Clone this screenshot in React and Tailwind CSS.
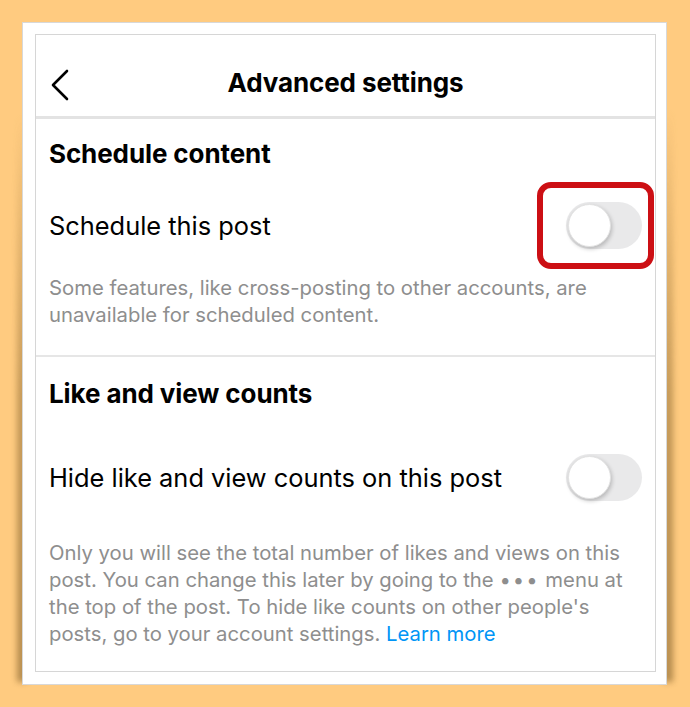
import React from 'react';

const Toggle = () => (
  <div className="w-[76px] h-[47px] rounded-full bg-[#e9e9ea] p-[2px] flex items-center shrink-0">
    <div className="w-[43px] h-[43px] rounded-full bg-white shadow-[1px_2px_4px_rgba(0,0,0,0.22)] border border-[#e2e2e2]" />
  </div>
);

export default function App() {
  return (
    <div className="w-[690px] h-[707px] bg-[#ffcb80] pt-[22px] pl-[22px]" style={{ fontFamily: 'Inter, "Liberation Sans", sans-serif' }}>
      <div className="relative w-[645px] h-[663px]">
        {/* side shadows behind the sheet */}
        <div className="absolute left-[-5px] top-[90px] w-[10px] h-[570px] bg-gradient-to-b from-transparent via-[#b38a4c] to-[#a07a40] blur-[3px] opacity-80" />
        <div className="absolute right-[-6px] top-[85px] w-[10px] h-[575px] bg-gradient-to-b from-transparent via-[#b38a4c] to-[#a07a40] blur-[3px] opacity-80" />
        <div className="relative w-[645px] h-[663px] bg-white border border-[#d8d8d8] pt-[11px] pl-[12px]">
          <div className="w-[621px] h-[638px] border border-[#d6d6d6] flex flex-col">
            <div className="h-[84px] flex items-center relative border-b-[3px] border-[#e3e3e3]">
              <svg className="absolute left-[14px] top-[34px]" width="20" height="32" viewBox="0 0 20 32" fill="none">
                <path d="M17 2 L3 16 L17 30" stroke="#000" strokeWidth="2.6" strokeLinecap="round" strokeLinejoin="round" />
              </svg>
              <div className="w-full text-center text-[26px] font-bold text-black pt-[14px] tracking-[-0.1px]">Advanced settings</div>
            </div>

            <div className="px-[13px]">
              <div className="text-[26px] font-bold text-black pt-[19px] leading-[32px] tracking-[-0.1px]">Schedule content</div>
              <div className="flex items-center justify-between mt-[32px]">
                <div className="text-[25.4px] text-black leading-[32px]">Schedule this post</div>
                <div className="relative">
                  <Toggle />
                  <div className="absolute -left-[29px] -top-[20px] w-[117px] h-[87px] border-[6px] border-[#cc0f14] rounded-[14px]" />
                </div>
              </div>
              <div className="text-[20.3px] text-[#8e8e8e] leading-[27px] mt-[25px] pb-[27px]">
                Some features, like cross-posting to other accounts, are unavailable for scheduled content.
              </div>
            </div>

            <div className="border-t-[2px] border-[#e6e6e6]" />

            <div className="px-[13px]">
              <div className="text-[26px] font-bold text-black pt-[21px] leading-[32px] tracking-[-0.1px]">Like and view counts</div>
              <div className="flex items-center justify-between mt-[44px]">
                <div className="text-[25.4px] text-black leading-[32px]">Hide like and view counts on this post</div>
                <Toggle />
              </div>
              <div className="text-[20.3px] text-[#8e8e8e] leading-[27px] mt-[38px]">
                Only you will see the total number of likes and views on this post. You can change this later by going to the <span className="tracking-[2px]">•••</span> menu at the top of the post. To hide like counts on other people's posts, go to your account settings. <span className="text-[#0095f6]">Learn more</span>
              </div>
            </div>
          </div>
        </div>
      </div>
    </div>
  );
}
